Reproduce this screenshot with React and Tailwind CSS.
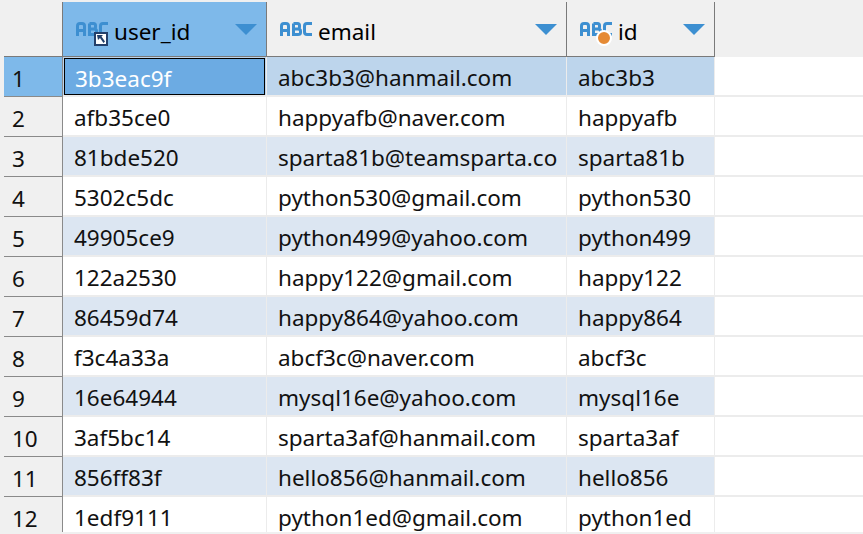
const rows = [
  ['1', '3b3eac9f', 'abc3b3@hanmail.com', 'abc3b3'],
  ['2', 'afb35ce0', 'happyafb@naver.com', 'happyafb'],
  ['3', '81bde520', 'sparta81b@teamsparta.co', 'sparta81b'],
  ['4', '5302c5dc', 'python530@gmail.com', 'python530'],
  ['5', '49905ce9', 'python499@yahoo.com', 'python499'],
  ['6', '122a2530', 'happy122@gmail.com', 'happy122'],
  ['7', '86459d74', 'happy864@yahoo.com', 'happy864'],
  ['8', 'f3c4a33a', 'abcf3c@naver.com', 'abcf3c'],
  ['9', '16e64944', 'mysql16e@yahoo.com', 'mysql16e'],
  ['10', '3af5bc14', 'sparta3af@hanmail.com', 'sparta3af'],
  ['11', '856ff83f', 'hello856@hanmail.com', 'hello856'],
  ['12', '1edf9111', 'python1ed@gmail.com', 'python1ed'],
]

function AbcIcon() {
  return (
    <svg className="block" width="32" height="14" viewBox="0 0 32 14" fill="none" stroke="#3d8fd1" strokeWidth="3">
      <path d="M1.5 14V4Q1.5 1.5 4 1.5H6Q8.5 1.5 8.5 4V14M1.5 8.5H8.5" />
      <path d="M13.5 1.5V12.5H18Q20.5 12.5 20.5 10.5V9Q20.5 7 18 7H13.5M13.5 1.5H17.5Q19.5 1.5 19.5 3.5V5Q19.5 7 17.5 7" />
      <path d="M32 1.5H27Q24.5 1.5 24.5 4V10Q24.5 12.5 27 12.5H32" />
    </svg>
  )
}

function HeaderCell({ name, width, active, badge }) {
  return (
    <div
      className={`${width} relative flex items-center border-b border-r border-[#7a7a7a] pl-[13px] pr-[8px] ${active ? 'bg-[#7eb9ea]' : 'bg-[#f0f0f0]'}`}
    >
      <div className="relative shrink-0">
        <AbcIcon />
        {badge === 'link' && (
          <span className="absolute left-[18px] top-[10px] flex h-[14px] w-[14px] items-center justify-center border-2 border-[#24406b] bg-white">
            <svg width="8" height="8" viewBox="0 0 8 8" fill="#24406b">
              <path d="M0 0H6L4.5 1.5L8 6.5L6.5 8L3 3L1 5Z" />
            </svg>
          </span>
        )}
        {badge === 'dot' && (
          <span className="absolute left-[16px] top-[8px] h-[16px] w-[16px] rounded-full border-2 border-white bg-[#e58a35]" />
        )}
      </div>
      <span className="ml-[6px] mt-[6px] text-black">{name}</span>
      <svg className="absolute right-[9px] top-[22px]" width="22" height="11" viewBox="0 0 22 11" fill="#3d8fd1">
        <path d="M0 0H22L11 11Z" />
      </svg>
    </div>
  )
}

function Row({ row, index, last }) {
  const selected = index === 0
  const striped = index % 2 === 0
  const cellBg = selected ? 'bg-[#bdd5ec]' : striped ? 'bg-[#dce6f2]' : 'bg-white'
  // the window cuts the last row off, so it has no bottom line
  const line = last ? 'border-r' : 'border-b-2 border-r'

  return (
    <div className={`flex bg-white ${last ? 'h-[35px]' : 'h-[40px]'}`}>
      <div
        className={`w-[59px] border-[#8a8a8a] pl-[8px] pt-[11px] ${last ? 'border-r' : 'border-b border-r'} ${selected ? 'bg-[#7eb9ea]' : 'bg-[#f0f0f0]'}`}
      >
        {row[0]}
      </div>
      <div className={`w-[204px] border-[#ececec] ${line} ${cellBg}`}>
        {selected ? (
          <div className="ml-[1px] mt-[1px] h-[37px] w-[201px] border border-black bg-[#6cabe3] pl-[10px] pt-[9px] text-white">
            {row[1]}
          </div>
        ) : (
          <div className="pl-[11px] pt-[10px]">{row[1]}</div>
        )}
      </div>
      <div className={`w-[300px] border-[#ececec] pl-[11px] pt-[10px] ${line} ${cellBg}`}>
        {row[2]}
      </div>
      <div className={`w-[148px] border-[#ececec] pl-[11px] pt-[10px] ${line} ${cellBg}`}>
        {row[3]}
      </div>
      <div className={`flex-1 border-[#ececec] ${last ? '' : 'border-b-2'}`} />
    </div>
  )
}

export default function App() {
  return (
    <div className="h-[534px] w-[863px] overflow-hidden bg-[#f0f0f0] pl-[4px] pt-[2px] font-['Noto_Sans',sans-serif] text-[22.5px] leading-none text-[#111]">
      <div className="flex h-[55px]">
        <div className="w-[59px] border-b border-r border-[#7a7a7a]" />
        <HeaderCell name="user_id" width="w-[204px]" active badge="link" />
        <HeaderCell name="email" width="w-[300px]" />
        <HeaderCell name="id" width="w-[148px]" badge="dot" />
      </div>
      {rows.map((row, i) => (
        <Row key={row[0]} row={row} index={i} last={i === rows.length - 1} />
      ))}
    </div>
  )
}
